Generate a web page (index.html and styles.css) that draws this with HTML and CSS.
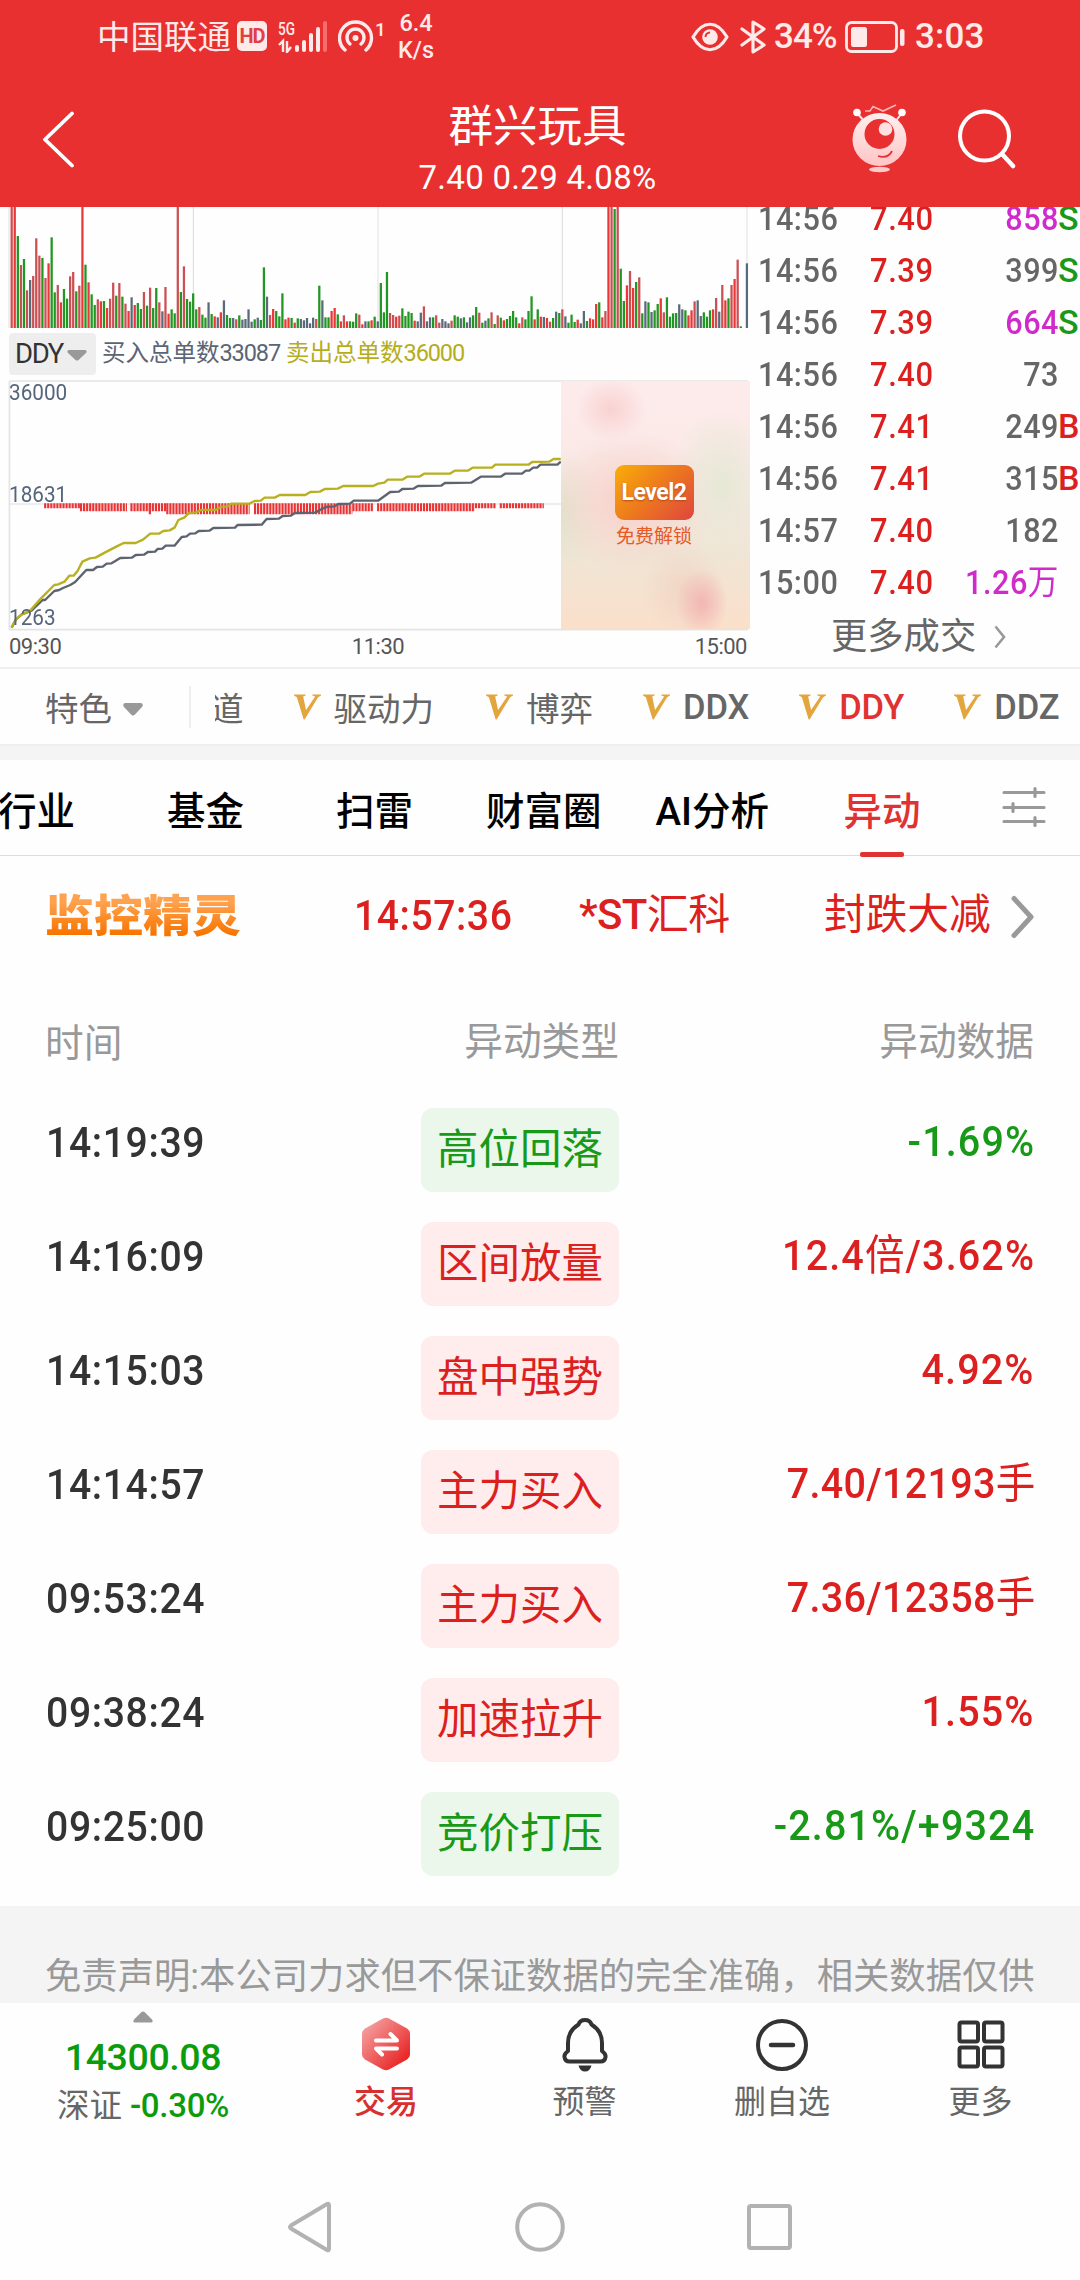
FILE: index.html
```html
<!DOCTYPE html>
<html lang="zh-CN">
<head>
<meta charset="utf-8">
<title>群兴玩具</title>
<link rel="stylesheet" href="styles.css">
</head>
<body>
<div class="phone">
  <header class="header">
    <div class="status">
      <div class="status-left">
        <span class="carrier">中国联通</span>
        <span class="hd">HD</span>
        <svg class="signal" width="50" height="34" viewBox="0 0 50 34">
          <text x="0" y="15.5" font-size="18" font-weight="500" textLength="17" lengthAdjust="spacingAndGlyphs" fill="#ffeaea">5G</text>
          <path d="M1 26l4-4v11M9 22v11l4-5" fill="none" stroke="#ffeaea" stroke-width="2.4"/>
          <path d="M19 28v3M26 23v8M33 16v15M40 10v21" stroke="#ffeaea" stroke-width="4" stroke-linecap="round"/>
          <path d="M47 4v27" stroke="#f66d6d" stroke-width="4" stroke-linecap="round"/>
        </svg>
        <svg class="hotspot" width="52" height="34" viewBox="0 0 52 34">
          <g fill="none" stroke="#ffeaea" stroke-width="3.4" stroke-linecap="round"><path d="M7 31A16 16 0 1 1 28 31"/><path d="M12 25A8.5 8.5 0 1 1 23 25"/></g>
          <circle cx="17.5" cy="19" r="3" fill="#ffeaea"/>
          <text x="37" y="17" font-size="19" font-weight="500" fill="#ffeaea">1</text>
        </svg>
        <span class="speed">6.4<br>K/s</span>
      </div>
      <div class="status-right">
        <svg width="38" height="30" viewBox="0 0 38 30"><path d="M2 15C12-2 26-2 36 15C26 32 12 32 2 15z" fill="none" stroke="#ffeaea" stroke-width="3.2" stroke-linejoin="round"/><circle cx="19" cy="15" r="7.8" fill="#ffeaea"/><path d="M14.5 15a4.5 4.5 0 0 1 4.5-4.500" fill="none" stroke="#e83030" stroke-width="2"/></svg>
        <svg class="bt" width="26" height="34" viewBox="0 0 26 34"><path d="M2 9l22 16-11 7V2l11 7L2 25" fill="none" stroke="#ffeaea" stroke-width="3.2" stroke-linejoin="round" stroke-linecap="round"/></svg>
        <span class="pct">34%</span>
        <svg class="bat" width="60" height="34" viewBox="0 0 60 34"><rect x="1.500" y="2.500" width="50" height="29" rx="5" fill="none" stroke="#ffeaea" stroke-width="2.800"/><rect x="6" y="7" width="16" height="20" rx="2.500" fill="#ffeaea"/><rect x="55" y="9" width="4.500" height="17" rx="2" fill="#ffeaea"/></svg>
        <span class="clock">3:03</span>
      </div>
    </div>
    <div class="titlebar">
      <svg class="back" width="34" height="58" viewBox="0 0 34 58"><path d="M31 3.500L4 29.500L31 55.500" fill="none" stroke="#fff" stroke-width="3.800" stroke-linecap="round" stroke-linejoin="round"/></svg>
      <div class="title"><h1>群兴玩具</h1><p>7.40 0.29 4.08%</p></div>
      <svg class="robot" width="56" height="70" viewBox="0 0 56 70">
        <defs><linearGradient id="ball" x1="0" y1="0" x2="0" y2="1"><stop offset="0" stop-color="#fff0f0"/><stop offset="1" stop-color="#ffc4c4"/></linearGradient></defs>
        <path d="M5 9l8 9M50 9l-7 9" stroke="#ffdede" stroke-width="2"/><circle cx="5" cy="8.500" r="3.800" fill="#fff"/><circle cx="50" cy="8.500" r="3.800" fill="#fff"/>
        <path d="M13 7h5l3-4.500 10 4.500 13-6" fill="none" stroke="#ffb5b5" stroke-width="1.600"/>
        <ellipse cx="27.500" cy="35.500" rx="27" ry="26.500" fill="url(#ball)"/>
        <circle cx="27.500" cy="30" r="15" fill="#e83030"/><circle cx="33.500" cy="25" r="6.800" fill="#ffe0e0"/>
        <path d="M26 52q10 3 14-5" fill="none" stroke="#e83030" stroke-width="1.800"/><ellipse cx="27.500" cy="65.500" rx="10.500" ry="2.800" fill="#ffc9c9"/>
      </svg>
      <svg class="search" width="58" height="60" viewBox="0 0 58 60"><circle cx="26.500" cy="27" r="24.500" fill="none" stroke="#fff" stroke-width="4"/><path d="M44 45l11 12" stroke="#fff" stroke-width="4.500" stroke-linecap="round"/></svg>
    </div>
  </header>

  <section class="quote">
    <div class="charts">
      <svg class="volume" id="volume" width="750" height="121" viewBox="0 0 2250 363" preserveAspectRatio="none">
        <path d="M580 0V363M1687 0V363" stroke="#dadada" stroke-width="3"/><path d="M27 0V363M1134 0V363M2241 0V363" stroke="#ececec" stroke-width="5"/>
      </svg>
      <div class="legend">
        <span class="picker">DDY<svg width="20" height="11" viewBox="0 0 20 11"><path d="M1.500 0h17q2 1 .5 3l-7.500 7q-1.500 1.200-3 0l-7.500-7Q-.5 1 1.500 0z" fill="#999"/></svg></span>
        <span class="buy">买入总单数<i>33087</i></span><span class="sell">卖出总单数<i>36000</i></span>
      </div>
      <div class="ddy">
        <svg width="750" height="252" viewBox="0 30 1547.400 756" preserveAspectRatio="none">
          <path d="M19 33H1543M19 779H1543" stroke="#e4e4e4" stroke-width="5"/><path d="M19 402H1543" stroke="#e8e8e8" stroke-width="5"/><path d="M19.500 33V779" stroke="#e4e4e4" stroke-width="3.500"/>
          <g stroke="#ea3334" stroke-dasharray="4.500 1.800">
            <path d="M91 407H165M980 407H1024M1031 407H1122" stroke-width="15"/>
            <path d="M165 411.500H262M269 411.500H343M727 411.500H771M778 411.500H980" stroke-width="24"/>
            <path d="M343 416H515M524 416H727M307 416H312" stroke-width="33"/>
          </g>
          <g fill="none" stroke-linejoin="round">
            <path vector-effect="non-scaling-stroke" stroke="#5d6470" stroke-width="2.400" d="M24 773L33 748 45 733 65 722 88 690H93L112 663 122 660 130 654 145 645 155 636 178 600H192L200 591 212 590 220 581 230 580 238 573 248 564 272 563 280 555 297 554 305 546 320 545 325 537 335 536 342 527H360L375 501 385 499 392 491 403 490 410 483 432 482 440 474 485 473 490 465 540 464 550 447 575 446 583 438 600 437 608 429 650 428 672 411 690 409 698 402 722 401 730 392H780L805 366 823 365 830 357 853 356 862 348 910 347 918 339 972 338 992 320H1033L1042 311H1077L1085 302H1092L1100 293H1108L1115 284H1150L1157 275"/>
            <path vector-effect="non-scaling-stroke" stroke="#b8b020" stroke-width="2.400" d="M24 773L33 748 45 733 62 722 80 692 112 645 120 643 133 635 143 617H152L160 603 170 575 185 565 197 563 220 545 240 530 255 519H280L295 509 310 491H328L337 483 350 481 360 473 368 450 380 443 390 429 405 427 415 420H445L455 411 470 409 477 401H515L525 393 538 392 546 383H567L577 375H630L640 366 660 365 670 357 697 356 708 348H770L780 341 793 338 800 329H830L840 320H865L875 311H928L938 302H965L975 293H1015L1022 284H1090L1098 276 1133 275 1142 267H1157"/>
          </g>
        </svg>
        <span class="axis a1">36000</span><span class="axis a2">18631</span><span class="axis a3">1263</span>
        <div class="promo"><b>Level2</b><span>免费解锁</span></div>
      </div>
      <div class="times"><span>09:30</span><span>11:30</span><span>15:00</span></div>
    </div>
    <div class="trades">
      <div class="trade"><span>14:56</span><em>7.40</em><b class="big">858</b><i class="s">S</i></div>
      <div class="trade"><span>14:56</span><em>7.39</em><b>399</b><i class="s">S</i></div>
      <div class="trade"><span>14:56</span><em>7.39</em><b class="big">664</b><i class="s">S</i></div>
      <div class="trade"><span>14:56</span><em>7.40</em><b>73</b><i></i></div>
      <div class="trade"><span>14:56</span><em>7.41</em><b>249</b><i>B</i></div>
      <div class="trade"><span>14:56</span><em>7.41</em><b>315</b><i>B</i></div>
      <div class="trade"><span>14:57</span><em>7.40</em><b>182</b><i></i></div>
      <div class="trade"><span>15:00</span><em>7.40</em><b class="big">1.26<u>万</u></b><i></i></div>
      <div class="more">更多成交<svg width="12" height="24" viewBox="0 0 12 24"><path d="M1.500 1.500L10 12L1.500 22.500" fill="none" stroke="#999" stroke-width="2.600"/></svg></div>
    </div>
  </section>

  <nav class="indicators">
    <span class="feature">特色<svg width="20" height="13" viewBox="0 0 20 13"><path d="M2 0h16q3 1 1 4l-7 7.500q-2 2-4 0L1 4Q-1 1 2 0z" fill="#999"/></svg></span>
    <div class="strip">
      <span class="cut">道</span>
      <span class="item i1"><svg class="v" viewBox="0 0 28 26"><path d="M0 0h12v1l-2.500 1 3 14L22 2l-3-1V0h9v1l-3 2L11 26h-1L3 3 0 1z"/></svg>驱动力</span>
      <span class="item i2"><svg class="v" viewBox="0 0 28 26"><path d="M0 0h12v1l-2.500 1 3 14L22 2l-3-1V0h9v1l-3 2L11 26h-1L3 3 0 1z"/></svg>博弈</span>
      <span class="item i3"><svg class="v" viewBox="0 0 28 26"><path d="M0 0h12v1l-2.500 1 3 14L22 2l-3-1V0h9v1l-3 2L11 26h-1L3 3 0 1z"/></svg>DDX</span>
      <span class="item i4 on"><svg class="v" viewBox="0 0 28 26"><path d="M0 0h12v1l-2.500 1 3 14L22 2l-3-1V0h9v1l-3 2L11 26h-1L3 3 0 1z"/></svg>DDY</span>
      <span class="item i5"><svg class="v" viewBox="0 0 28 26"><path d="M0 0h12v1l-2.500 1 3 14L22 2l-3-1V0h9v1l-3 2L11 26h-1L3 3 0 1z"/></svg>DDZ</span>
    </div>
  </nav>

  <nav class="tabs">
    <span>行业</span><span>基金</span><span>扫雷</span><span>财富圈</span><span>AI分析</span><span class="on">异动</span>
    <svg width="44" height="42" viewBox="0 0 44 42"><path d="M2 6.500H42M2 21.500H42M2 35.500H42M33 2.500v8M11 17.500v8M33 31.500v8" stroke="#999" stroke-width="3.200" stroke-linecap="round"/></svg>
  </nav>

  <section class="monitor">
    <strong>监控精灵</strong><span class="mt">14:57:36</span><span class="ms">*ST<u>汇科</u></span><span class="me">封跌大减</span>
    <svg width="24" height="44" viewBox="0 0 24 44"><path d="M3 3.500L20 22L3 40.500" fill="none" stroke="#999" stroke-width="5" stroke-linecap="round" stroke-linejoin="round"/></svg>
  </section>

  <section class="moves">
    <div class="row head"><span>时间</span><span>异动类型</span><span>异动数据</span></div>
    <div class="row down"><time>14:19:39</time><b>高位回落</b><em>-1.69%</em></div>
    <div class="row"><time>14:16:09</time><b>区间放量</b><em>12.4<u>倍</u>/3.62%</em></div>
    <div class="row"><time>14:15:03</time><b>盘中强势</b><em>4.92%</em></div>
    <div class="row"><time>14:14:57</time><b>主力买入</b><em class="lots">7.40/12193<u>手</u></em></div>
    <div class="row"><time>09:53:24</time><b>主力买入</b><em class="lots">7.36/12358<u>手</u></em></div>
    <div class="row"><time>09:38:24</time><b>加速拉升</b><em>1.55%</em></div>
    <div class="row down"><time>09:25:00</time><b>竞价打压</b><em>-2.81%/+9324</em></div>
  </section>

  <p class="disclaimer">免责声明:本公司力求但不保证数据的完全准确，相关数据仅供</p>

  <nav class="toolbar">
    <div class="index">
      <svg width="20" height="12" viewBox="0 0 20 12"><path d="M8.500 1q1.500-1.200 3 0l7.500 7.500q1.500 3-1 3h-16q-2.500 0-1-3z" fill="#999"/></svg>
      <strong>14300.08</strong>
      <p>深证 <em>-0.30%</em></p>
    </div>
    <div class="tool on">
      <svg width="54" height="56" viewBox="0 0 54 56"><defs><linearGradient id="hex" x1="0" y1="0" x2="1" y2="1"><stop offset=".1" stop-color="#f5a0a0"/><stop offset=".9" stop-color="#e81e1e"/></linearGradient></defs><path d="M24 2.500q3-1.500 6 0l18 10q3 2 3 5v21q0 3-3 5l-18 10q-3 1.500-6 0l-18-10q-3-2-3-5v-21q0-3 3-5z" fill="url(#hex)"/><path d="M17 24.500h21l-6.500-6.500M38 32.500H17l6 6" fill="none" stroke="#fff" stroke-width="4" stroke-linecap="round" stroke-linejoin="round"/></svg>交易</div>
    <div class="tool"><svg width="54" height="56" viewBox="0 0 54 56"><path d="M20.500 8.500Q22 4 27 4t6.500 4.500Q44 15 44 27v8q4 3 3.500 6-.5 4.500-5 4.500h-31q-4.500 0-5-4.500Q6 38 10 35v-8q0-12 10.500-18.500z" fill="none" stroke="#333" stroke-width="4" stroke-linejoin="round"/><path d="M20.500 49.500h13q-1.500 6-6.500 6t-6.500-6z" fill="#333"/></svg>预警</div>
    <div class="tool"><svg width="54" height="56" viewBox="0 0 54 56"><circle cx="27" cy="29" r="24" fill="none" stroke="#333" stroke-width="4"/><path d="M16 29h22" stroke="#333" stroke-width="4.500" stroke-linecap="round"/></svg>删自选</div>
    <div class="tool"><svg width="54" height="56" viewBox="0 0 54 56"><g fill="none" stroke="#333" stroke-width="4"><rect x="5.500" y="6.500" width="18.500" height="19" rx="2"/><rect x="30" y="6.500" width="18.500" height="19" rx="2"/><rect x="5.500" y="31.500" width="18.500" height="19" rx="2"/><rect x="30" y="31.500" width="18.500" height="19" rx="2"/></g></svg>更多</div>
  </nav>

  <footer class="sysnav">
    <svg width="46" height="54" viewBox="0 0 46 54"><path d="M40 4q2-1 2 1.500v43q0 2.500-2 1.500L4 28.500q-2-1.500 0-3z" fill="none" stroke="#b2b2b2" stroke-width="4"/></svg>
    <svg width="50" height="54" viewBox="0 0 50 54"><circle cx="25" cy="27" r="22.800" fill="none" stroke="#b2b2b2" stroke-width="4"/></svg>
    <svg width="46" height="54" viewBox="0 0 46 54"><rect x="2" y="6" width="41" height="42" rx="2" fill="none" stroke="#b2b2b2" stroke-width="4"/></svg>
  </footer>
</div>
<script src="volume.js"></script>
</body>
</html>
```
FILE: styles.css
```css
* { box-sizing: border-box; }
body { margin: 0; background: #fff; font-family: Roboto, "Noto Sans CJK SC", sans-serif; }
h1, p { margin: 0; font-weight: 400; }
i, em { font-style: normal; }
u { text-decoration: none; font-weight: 400; }
svg { display: block; flex: none; }
span, b, em, strong, time { white-space: nowrap; }
.phone { width: 1080px; height: 2280px; overflow: hidden; display: flex; flex-direction: column; background: #fefefe; }
.phone > * { flex: none; }

.header { height: 207px; background: #e83030; color: #fff; }
.status { height: 72px; display: flex; justify-content: space-between; padding: 0 97px; color: #ffeaea; }
.status-left, .status-right { display: flex; align-items: center; }
.carrier { font-size: 33.5px; line-height: 72px; padding-top: 3px; }
.hd { margin-left: 6px; width: 30px; height: 30px; border-radius: 5px; background: #ffeaea; color: #e04040; font-size: 20px; font-weight: 700; line-height: 30px; text-align: center; letter-spacing: -1px; }
.signal { margin-left: 11px; }
.hotspot { margin-left: 10px; }
.speed { margin-left: 8px; padding-top: 2px; font-size: 23.5px; font-weight: 500; line-height: 27px; text-align: center; }
.status-right { padding-top: 1px; }
.bt { margin-left: 11px; }
.pct { margin-left: 8px; width: 64px; font-size: 35px; font-weight: 500; letter-spacing: -1px; }
.bat { margin-left: 7px; }
.clock { margin-left: 10px; font-size: 35px; font-weight: 500; width: 68px; letter-spacing: .2px; }
.titlebar { height: 135px; display: grid; grid-template-columns: 41px 34px 1fr 56px 50px 58px 64px; align-items: center; }
.back { grid-column: 2; margin-top: -1px; }
.title { grid-column: 3; display: flex; flex-direction: column; align-items: center; padding-left: 152px; margin-right: 4px; }
.title h1 { font-size: 44.5px; line-height: 54px; padding-top: 18px; }
.title p { font-size: 33px; line-height: 40px; margin-top: 4px; letter-spacing: .3px; }
.robot { grid-column: 4; margin-top: -2px; }
.search { grid-column: 6; margin-top: -1px; }

.quote { height: 462px; display: flex; border-bottom: 2px solid #eee; }
.charts { width: 750px; }
.legend { height: 51px; display: flex; align-items: flex-start; padding: 5px 0 0 9px; font-size: 23.5px; line-height: 40px; }
.picker { width: 87px; height: 42px; background: #eee; border-radius: 4px; display: flex; align-items: center; padding-left: 6px; font-size: 27.5px; letter-spacing: -1.4px; color: #333; }
.picker svg { margin: 2px 0 0 4px; }
.legend i { letter-spacing: -1.1px; }
.buy { margin-left: 6px; color: #5b6575; }
.sell { margin-left: 6px; color: #b5ad1a; }
.ddy { position: relative; height: 252px; margin-top: 1px; }
.axis { position: absolute; left: 9px; font-size: 22.5px; line-height: 22px; color: #56657a; transform: scaleX(.92); transform-origin: 0 50%; }
.a1 { top: 1px; }
.a2 { top: 103px; }
.a3 { top: 226px; }
.promo { position: absolute; left: 561px; top: 1px; width: 189px; height: 248px; padding-top: 84px; display: flex; flex-direction: column; align-items: center;
  background: radial-gradient(ellipse 36px 32px at 50px 28px, #f8cbcacc, #f8cbca00), radial-gradient(ellipse 26px 34px at 141px 222px, #f3b0b0cc 10%, #f3b0b000), radial-gradient(ellipse 42px 48px at 122px 208px, #efcfc0aa, #efcfc000), radial-gradient(ellipse 50px 80px at 160px 105px, #e6e8d5, #e6e8d500), radial-gradient(ellipse 85px 70px at 70px 120px, #f7d0c9, #f7d0c900), radial-gradient(ellipse 40px 60px at 0 130px, #e0e3cc, #e0e3cc00), linear-gradient(#fdebeb 10%, #f8e8e3 45%, #f0e5d5 70%, #fae0ca); }
.promo b { width: 79px; height: 55px; margin-right: 3px; border-radius: 9px; background: linear-gradient(135deg, #f9ae08, #ee7d1c 45%, #df453f); color: #fff; font-size: 23px; line-height: 55px; text-align: center; font-weight: 700; letter-spacing: -.5px; text-shadow: 0 1px 2px #b54a18; }
.promo span { font-size: 19px; line-height: 28px; margin: 3px 3px 0 0; color: #e65a26; }
.times { display: flex; justify-content: space-between; padding: 2px 3px 0 9px; font-size: 22px; line-height: 26px; letter-spacing: -.5px; color: #555; }
.trades { width: 330px; height: 460px; overflow: hidden; color: #666; }
.trade { height: 52px; line-height: 52px; display: grid; grid-template-columns: 112px 78px 118px 22px; padding-left: 8px; font-size: 34px; font-weight: 500; letter-spacing: .6px; }
.trade:first-child { margin-top: -15px; }
.trade span { transform: scaleX(.9); transform-origin: 0 50%; }
.trade em { color: #dc1f1f; transform: scaleX(.91); transform-origin: 0 50%; }
.trade b { font-weight: 500; text-align: right; margin-right: 7px; transform: scaleX(.9); transform-origin: 100% 50%; }
.trade .big { color: #cf2bcb; }
.trade i { color: #dc1f1f; margin-left: -8px; }
.trade .s { color: #189a18; }
.more { display: flex; align-items: center; font-size: 36.3px; line-height: 40px; padding: 9px 0 0 81px; }
.more svg { margin-left: 18px; }

.indicators { height: 91px; border-bottom: 14px solid #f4f4f4; box-shadow: inset 0 -2px #efefef; display: flex; align-items: center; font-size: 33.5px; color: #666; padding: 0 0 2px 45px; }
.feature { display: flex; align-items: center; width: 146px; height: 42px; border-right: 2px solid #eee; }
.feature svg { margin: 5px 0 0 11px; }
.strip { flex: 1; display: flex; align-items: center; overflow: hidden; margin-left: 24px; }
.cut { margin-left: -5px; }
.item { display: flex; align-items: center; gap: 13px; }
.v { width: 27px; height: 26px; fill: #e3a63e; }
.i1 { margin-left: 50px; }
.i2 { margin-left: 52px; }
.i3, .i4, .i5 { margin-left: 50px; font-size: 34.5px; font-weight: 500; letter-spacing: -.1px; }
.on { color: #e03232; }

.tabs { height: 96px; display: flex; align-items: center; border-bottom: 1px solid #ddd; font-size: 38.5px; font-weight: 500; color: #000; }
.tabs span { position: relative; }
.tabs span:nth-child(1) { margin-left: -2px; }
.tabs span:nth-child(2) { margin-left: 92px; }
.tabs span:nth-child(3) { margin-left: 92px; }
.tabs span:nth-child(4) { margin-left: 73px; }
.tabs span:nth-child(5) { margin-left: 54px; width: 115px; }
.tabs span:nth-child(6) { margin-left: 73px; }
.tabs .on::after { content: ""; position: absolute; left: 16px; bottom: -21px; width: 44px; height: 5px; border-radius: 2px; background: #e03232; }
.tabs svg { margin: -2px 0 0 81px; }

.monitor { height: 122px; display: grid; grid-template-columns: 309px 225px 245px 187px 24px; padding: 0 0 4px 45px; align-items: center; color: #dc1f1f; font-size: 42px; line-height: 60px; }
.monitor strong { font-size: 49px; font-weight: 900; transform: scaleY(.9); transform-origin: 0 50%; background: linear-gradient(#ffa24f 20%, #f87400 80%); -webkit-background-clip: text; background-clip: text; color: transparent; margin-top: 6px; justify-self: start; }
.mt { font-size: 43px; font-weight: 500; letter-spacing: .6px; transform: scaleX(.91); transform-origin: 0 50%; margin-top: -1px; }
.ms { font-weight: 500; letter-spacing: -.6px; }
.me { font-size: 41.7px; }
.monitor svg { margin-top: 3px; }

.moves { height: 928px; }
.row { height: 114px; padding: 0 46px; display: grid; grid-template-columns: 375px 198px 1fr; align-items: center; color: #dc1f1f; }
.head { height: 115px; padding-top: 4px; font-size: 38.7px; color: #999; }
.head span:first-child { padding-top: 4px; margin-left: -1px; }
.head span:nth-child(2), .head span:nth-child(3) { justify-self: end; }
.row time { font-size: 43px; font-weight: 500; letter-spacing: .7px; color: #333; margin-bottom: 16px; transform: scaleX(.91); transform-origin: 0 50%; }
.row b { height: 84px; border-radius: 12px; background: #ffecec; font-size: 41.5px; font-weight: 400; line-height: 83px; text-align: center; }
.row em { justify-self: end; font-size: 42.5px; font-weight: 500; line-height: 60px; letter-spacing: 1.2px; margin: 0 -1px 16px 0; transform: scaleX(.93); transform-origin: 100% 50%; }
.row .lots { letter-spacing: .3px; }
.down { color: #189a18; }
.down b { background: #ebf7eb; }

.disclaimer { height: 97px; background: #f4f4f4; color: #999; font-size: 36.35px; line-height: 97px; padding: 22px 0 0 45px; white-space: nowrap; overflow: hidden; }
.toolbar { height: 147px; display: grid; grid-template-columns: 286px 200px 197px 198px 199px; background: #fefefe; font-size: 32px; color: #666; }
.index { display: flex; flex-direction: column; align-items: center; padding-top: 8px; color: #0a9c0a; }
.index strong { font-size: 37.5px; font-weight: 500; line-height: 44px; margin-top: 12px; letter-spacing: -.4px; }
.index p { color: #666; line-height: 40px; margin-top: 7px; font-size: 32.5px; }
.index em { color: #0a9c0a; font-weight: 500; font-size: 33px; letter-spacing: -.3px; }
.tool { display: flex; flex-direction: column; align-items: center; padding-top: 13px; line-height: 40px; }
.tool svg { margin-bottom: 10px; }
.toolbar .on { color: #d83030; font-weight: 500; }
.sysnav { height: 130px; display: flex; align-items: center; justify-content: center; gap: 182px; padding: 24px 0 0; }
```
FILE: volume.js
```js
// One entry per minute: colour key followed by the distance of the bar's top from the chart top.
const bars = `D0 R0 G87 D174 G156 D250 B219 D207 D94 D146 G153 D213 R169 G91 G256 D234 R286 G246 G275 D208 D195 G253 D236 R0 G173 R226 G262 G294 D277 R283 G282 R303 D275 D227 G266 D228 G269 D290 R312 B271
R294 G288 G306 D255 G296 D242 G303 G243 D286 B313 D240 R320 G307 G319 D0 G255 D178 G276 G284 G259 G307 D300 G323 G332 B286 G321 R328 B331 R316 B280 G324 G333 B333 D337 G325 B338 B336 B307 B344 G337
B332 G339 G181 B269 D324 R306 G312 G328 G259 R337 R332 G333 R347 G334 B336 B340 B333 B349 B332 D336 G236 B280 G331 G331 R312 R303 G322 R343 D325 R343 G343 G344 G319 D323 R352 B343 G343 R340 G329 B343
G228 G316 G195 D318 D324 R329 D326 G304 G327 G314 G318 R341 B343 B317 D298 B343 B331 G331 D325 D347 B336 B343 B349 D341 G325 G329 B334 G331 B346 B331 G325 G300 D317 G347 B341 G334 D316 G351 D325 G332
R340 G336 G327 G312 G331 R349 D331 G337 G312 G268 R337 G307 R329 B330 R333 D344 G333 B314 G318 D307 B328 G347 G323 G345 R338 B349 B312 G342 R334 R337 R291 G286 R331 D312 R0 D0 G6 D0 G185 G282
R235 D192 R243 G225 D211 G319 B283 G286 B315 G310 G291 R274 D316 G271 G329 G319 G318 B292 B307 G310 R325 R310 D283 B280 B327 G316 G329 G310 R307 D273 B314 D234 R280 G274 D234 R216 D158 G358 _363 B169`.split(/\s+/);
const colours = { R: '#e83838', D: '#cb5054', G: '#229622', B: '#596a7b' };
const chart = document.getElementById('volume');
bars.forEach((bar, i) => {
  const top = Number(bar.slice(1));
  if (top >= 363) return;
  const rect = document.createElementNS('http://www.w3.org/2000/svg', 'rect');
  rect.setAttribute('x', (31.6 + i * 9.229).toFixed(1));
  rect.setAttribute('y', top);
  rect.setAttribute('width', 6.8);
  rect.setAttribute('height', 363 - top);
  rect.setAttribute('fill', colours[bar[0]]);
  chart.appendChild(rect);
});
```
